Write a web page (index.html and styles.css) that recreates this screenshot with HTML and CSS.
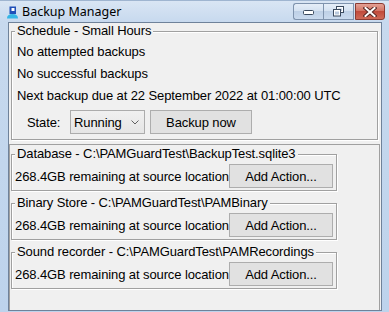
FILE: index.html
```html
<!DOCTYPE html>
<html lang="en">
<head>
    <meta charset="UTF-8">
    <meta name="viewport" content="width=device-width, initial-scale=1.0">
    <title>Backup Manager</title>
    <link rel="stylesheet" href="styles.css">
</head>
<body>
    <div class="window">
        <div class="titlebar">
            <svg class="app-icon" width="13" height="13" viewBox="0 0 13 13">
                <path d="M1 12.5 Q1 8 6.5 8 Q12 8 12 12.5 Z" fill="#35b6e6"/>
                <path d="M3.5 0.5 H10 V8 H3.5 Z" fill="#1f4fb8"/>
                <path d="M5.5 2 H8.5 V5 H5.5 Z" fill="#ffffff"/>
            </svg>
            <span class="title">Backup Manager</span>
            <div class="caption">
                <div class="cap cap-min">
                    <svg width="12" height="6" viewBox="0 0 12 6"><rect x="0.5" y="0.5" width="10" height="4" rx="1" fill="#fff" stroke="#3b4a5e"/></svg>
                </div>
                <div class="cap cap-max">
                    <svg width="12" height="11" viewBox="0 0 12 11">
                        <rect x="3.5" y="0.5" width="7" height="6" fill="#fff" stroke="#3b4a5e"/>
                        <rect x="5" y="2.5" width="4" height="2.5" fill="#b9c9dd"/>
                        <rect x="0.5" y="3.5" width="7" height="6.5" fill="#fff" stroke="#3b4a5e"/>
                        <rect x="2" y="5.5" width="4" height="3" fill="#b9c9dd"/>
                    </svg>
                </div>
                <div class="cap cap-close">
                    <svg width="14" height="10" viewBox="0 0 14 10">
                        <path d="M2.5 1 L11.5 9 M11.5 1 L2.5 9" stroke="#5a2a26" stroke-width="4" stroke-linecap="square"/>
                        <path d="M2.5 1 L11.5 9 M11.5 1 L2.5 9" stroke="#ffffff" stroke-width="2" stroke-linecap="square"/>
                    </svg>
                </div>
            </div>
        </div>

        <div class="client">
            <fieldset class="group schedule">
                <legend>Schedule - Small Hours</legend>
                <div class="line">No attempted backups</div>
                <div class="line">No successful backups</div>
                <div class="line">Next backup due at 22 September 2022 at 01:00:00 UTC</div>
                <div class="state-row">
                    <span class="state-label">State:</span>
                    <div class="combo">
                        <span>Running</span>
                        <svg class="chevron" width="8" height="5" viewBox="0 0 8 5"><polyline points="0.5,0.5 4,4 7.5,0.5" fill="none" stroke="#606060"/></svg>
                    </div>
                    <button class="win-button backup-now">Backup now</button>
                </div>
            </fieldset>

            <div class="stores">
                <fieldset class="group store">
                    <legend>Database - C:\PAMGuardTest\BackupTest.sqlite3</legend>
                    <div class="store-row">
                        <span class="free">268.4GB remaining at source location</span>
                        <button class="win-button add-action">Add Action...</button>
                    </div>
                </fieldset>
                <fieldset class="group store">
                    <legend>Binary Store - C:\PAMGuardTest\PAMBinary</legend>
                    <div class="store-row">
                        <span class="free">268.4GB remaining at source location</span>
                        <button class="win-button add-action">Add Action...</button>
                    </div>
                </fieldset>
                <fieldset class="group store">
                    <legend>Sound recorder - C:\PAMGuardTest\PAMRecordings</legend>
                    <div class="store-row">
                        <span class="free">268.4GB remaining at source location</span>
                        <button class="win-button add-action">Add Action...</button>
                    </div>
                </fieldset>
            </div>
        </div>
    </div>
</body>
</html>
```

FILE: styles.css
```css
body {
    margin: 0;
    width: 389px;
    height: 312px;
    overflow: hidden;
    font-family: 'Liberation Sans', Arial, sans-serif;
    font-size: 13px;
    letter-spacing: -0.1px;
    color: #000;
}
.window {
    height: 312px;
    display: flex;
    flex-direction: column;
    background: linear-gradient(to bottom, #dae6f4 0, #c7d9ee 22px, #bdd3ec 100%);
    box-sizing: border-box;
}
.titlebar {
    height: 22px;
    flex: none;
    display: flex;
    align-items: center;
    padding: 0 4px 0 6px;
    border-top: 1px solid #9fb5d0;
    box-sizing: border-box;
}
.app-icon {
    margin-right: 3px;
    margin-top: 1px;
}
.title {
    font-family: 'Noto Sans', sans-serif;
    font-size: 12.5px;
    letter-spacing: 0;
    color: #000;
}
.caption {
    margin-left: auto;
    align-self: flex-start;
    margin-top: 2px;
    display: flex;
}
.cap {
    width: 30px;
    height: 17px;
    box-sizing: border-box;
    border: 1px solid #7f93ad;
    background: linear-gradient(to bottom, #e6eef8 0%, #d5e2f1 45%, #bed0e6 50%, #c9daee 100%);
    display: flex;
    align-items: center;
    justify-content: center;
}
.cap-min {
    border-radius: 3px 0 0 3px;
    border-right: none;
}
.cap-min svg {
    margin-top: 3px;
}
.cap-max {
    width: 31px;
}
.cap-close {
    margin-left: 1px;
    border-color: #8b3b33;
    border-radius: 0 3px 3px 0;
    background: linear-gradient(to bottom, #e4a195 0%, #d37465 45%, #c14b3c 50%, #cf6a58 100%);
}
.client {
    flex: 1;
    margin: 0 7px 1px 8px;
    border: 1px solid #6f829a;
    background: #f0f0f0;
    display: flex;
    flex-direction: column;
}
.group {
    margin: 0;
    border: 1px solid #a0a0a0;
    box-shadow: inset 1px 1px 0 #fff, 1px 1px 0 #fff;
    min-inline-size: 0;
}
.group legend {
    line-height: 16px;
    padding: 0 2px;
    background: #f0f0f0;
}
.schedule {
    margin: 0 3px 0 2px;
    padding: 2px 5px 5px 5px;
}
.schedule legend {
    margin-left: -2px;
}
.line {
    height: 22px;
    line-height: 22px;
    white-space: nowrap;
}
.state-row {
    display: flex;
    align-items: center;
    margin-top: 3px;
    padding-left: 10px;
    height: 24px;
}
.state-label {
    width: 43px;
}
.combo {
    width: 75px;
    height: 24px;
    box-sizing: border-box;
    border: 1px solid #acacac;
    background: linear-gradient(to bottom, #f0f0f0, #e5e5e5);
    display: flex;
    align-items: center;
    padding-left: 3px;
    margin-right: 5px;
}
.chevron {
    margin-left: auto;
    margin-right: 5px;
}
.win-button {
    height: 24px;
    box-sizing: border-box;
    border: 1px solid #adadad;
    background: #e1e1e1;
    font-family: inherit;
    font-size: 13px;
    letter-spacing: inherit;
    color: #000;
    padding: 0;
}
.backup-now {
    width: 102px;
}
.stores {
    flex: 1;
    margin: 4px 1px 0 0;
    border: 1px solid #a0a0a0;
    border-bottom: none;
}
.store {
    width: 326px;
    box-sizing: border-box;
    margin: 1px 0 4px 1px;
    padding: 2px 3px 2px 3px;
}
.store-row {
    display: flex;
    align-items: center;
    height: 24px;
}
.free {
    flex: 1;
    white-space: nowrap;
}
.add-action {
    flex: none;
    width: 104px;
}
```
